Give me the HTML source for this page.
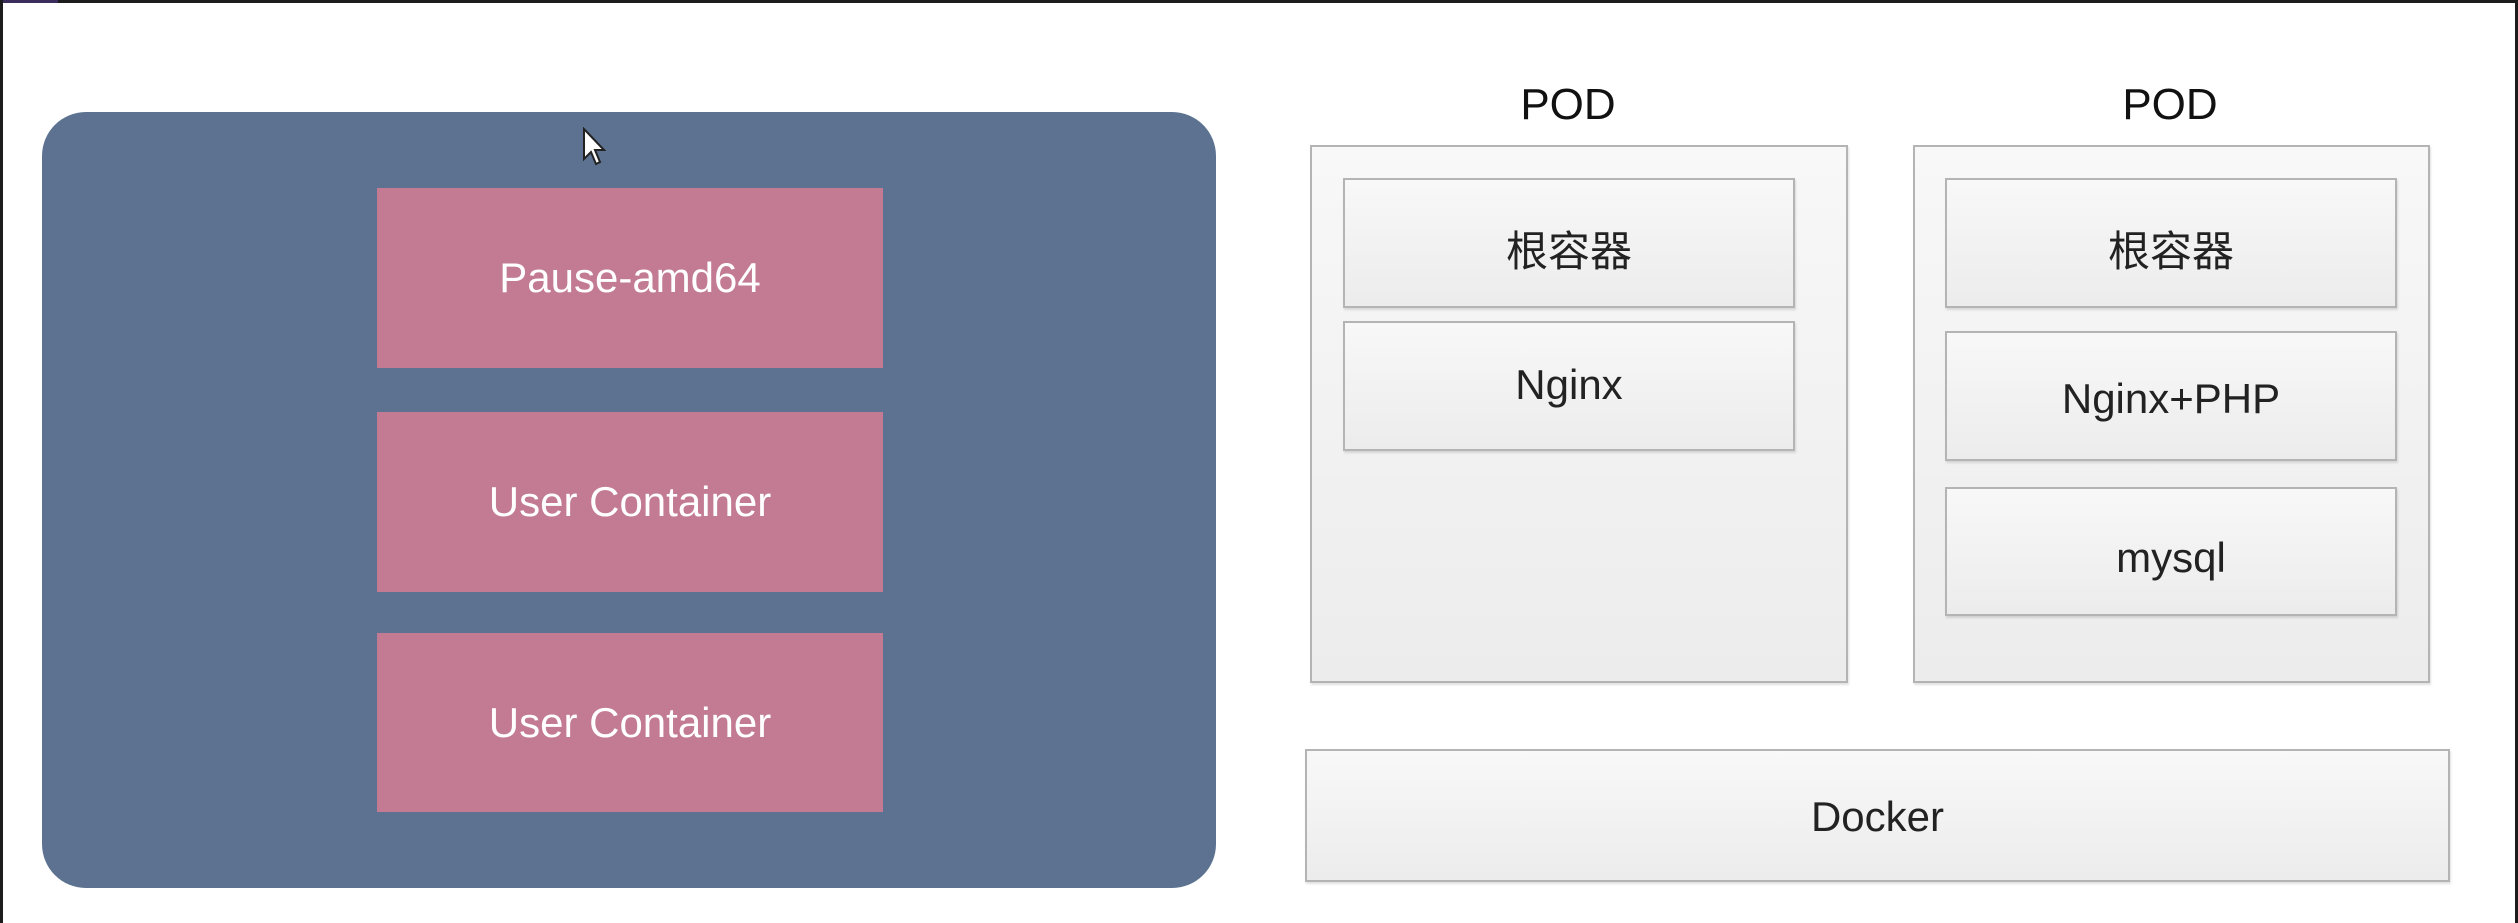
<!DOCTYPE html>
<html><head><meta charset="utf-8"><style>
html,body{margin:0;padding:0}
body{width:2518px;height:923px;background:#fff;position:relative;overflow:hidden;font-family:"Liberation Sans","Noto Sans CJK SC",sans-serif}
div{position:absolute;box-sizing:border-box}
.pink{left:377px;width:506px;background:#c27b93;color:#fff;font-size:42px;display:flex;align-items:center;justify-content:center}
.g{border:2px solid #b4b4b4;background:linear-gradient(#f8f8f8,#ececec);box-shadow:1px 2px 2px rgba(0,0,0,.12)}
.in{display:flex;justify-content:center;color:#222;font-size:42px;padding-top:40px}
.lbl{font-size:44px;color:#111;width:200px;text-align:center;top:80px}
</style></head><body>
<div style="left:0;top:0;width:2518px;height:3px;background:#1c1c1c"></div>
<div style="left:2px;top:0;width:56px;height:3px;background:#3a2d5c"></div>
<div style="left:0;top:0;width:3px;height:923px;background:#1c1c1c"></div>
<div style="right:0;top:0;width:3px;height:923px;background:#1c1c1c"></div>

<div style="left:42px;top:112px;width:1174px;height:776px;background:#5d7290;border-radius:44px"></div>
<div class="pink" style="top:188px;height:180px">Pause-amd64</div>
<div class="pink" style="top:412px;height:180px">User Container</div>
<div class="pink" style="top:633px;height:179px">User Container</div>
<svg style="position:absolute;left:582px;top:127px" width="24" height="40" viewBox="0 0 24 40"><path d="M2 2 L2 32 L9 25 L14 37 L18 35 L13 23 L22 23 Z" fill="#fff" stroke="#222" stroke-width="2"/></svg>

<div class="lbl" style="left:1468px">POD</div>
<div class="lbl" style="left:2070px">POD</div>
<div class="g" style="left:1310px;top:145px;width:538px;height:538px"></div>
<div class="g" style="left:1913px;top:145px;width:517px;height:538px"></div>
<div class="g in" style="left:1343px;top:178px;width:452px;height:130px;padding-top:38px">根容器</div>
<div class="g in" style="left:1343px;top:321px;width:452px;height:130px;padding-top:38px">Nginx</div>
<div class="g in" style="left:1945px;top:178px;width:452px;height:130px;padding-top:38px">根容器</div>
<div class="g in" style="left:1945px;top:331px;width:452px;height:130px;padding-top:42px">Nginx+PHP</div>
<div class="g in" style="left:1945px;top:487px;width:452px;height:129px;padding-top:45px">mysql</div>
<div class="g in" style="left:1305px;top:749px;width:1145px;height:133px;padding-top:42px">Docker</div>
</body></html>
